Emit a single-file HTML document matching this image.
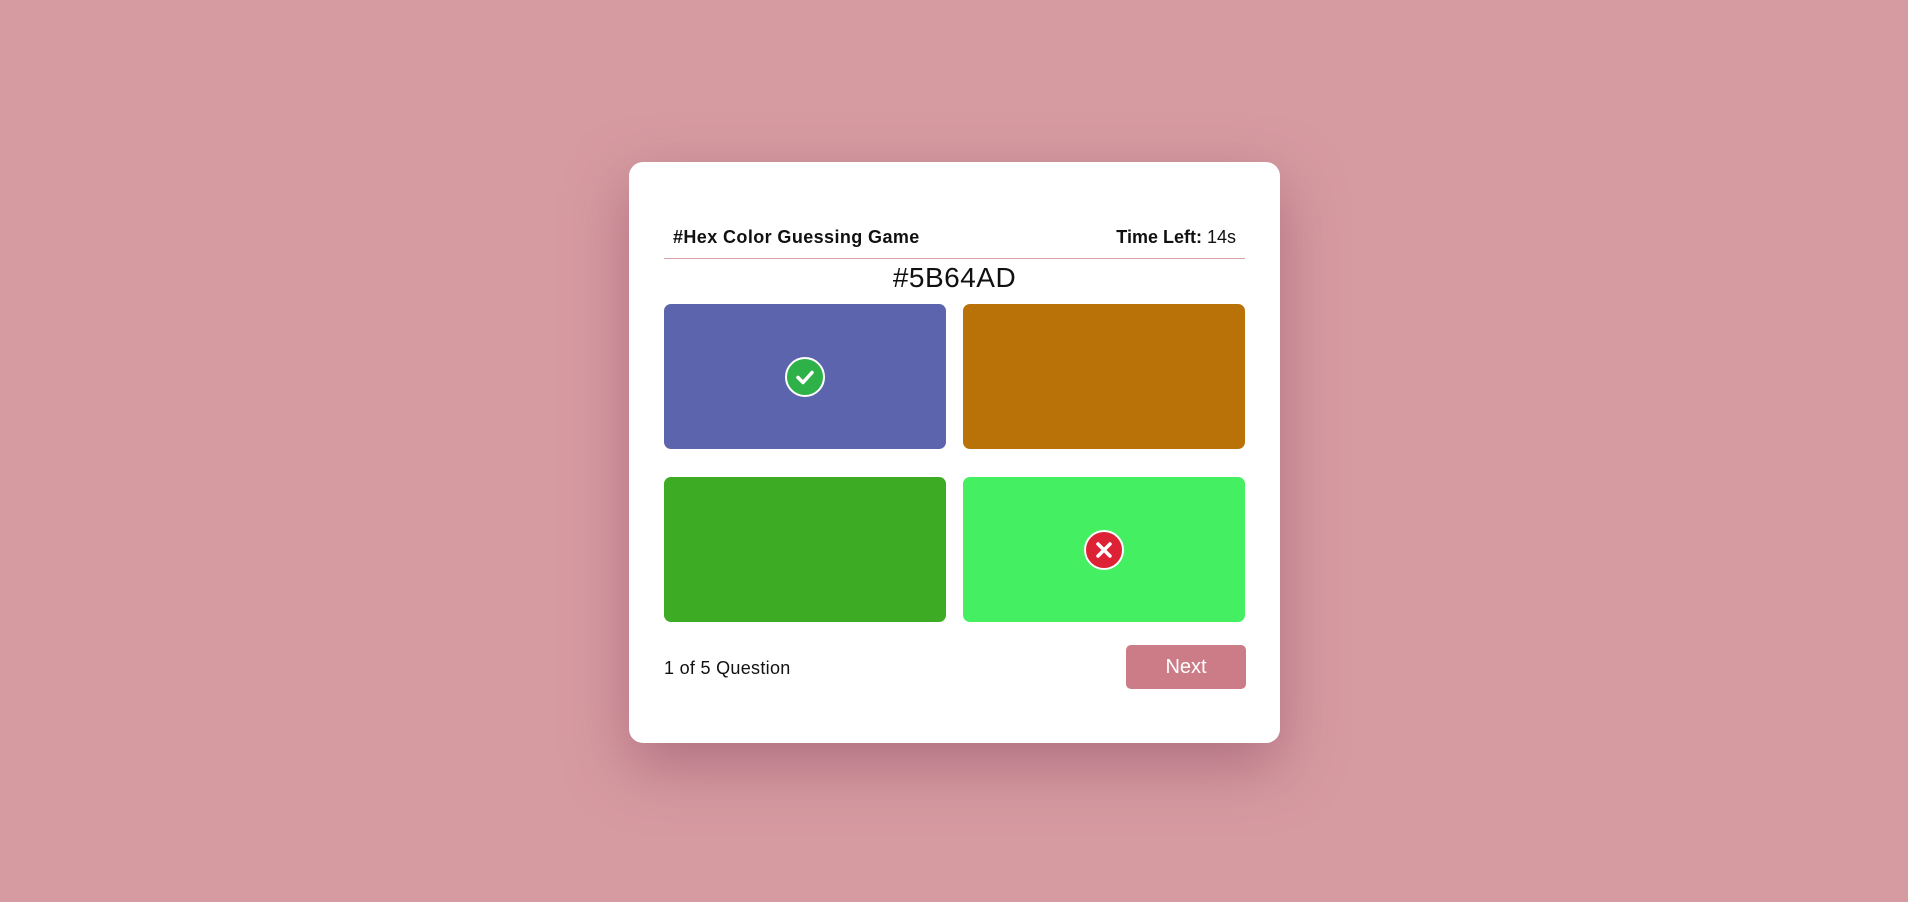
<!DOCTYPE html>
<html><head><meta charset="utf-8"><style>
html,body{margin:0;padding:0}
body{width:1908px;height:902px;background:#d69ba1;font-family:"Liberation Sans",sans-serif;position:relative;overflow:hidden}
.card{position:absolute;left:629px;top:162px;width:651px;height:581px;background:#fff;border-radius:14px;box-shadow:0 22px 60px rgba(140,70,95,.5)}
.hdr{position:absolute;left:35px;right:35px;top:0;height:96px;border-bottom:1.5px solid #d9a3a8}
.t{position:absolute;left:9px;top:65px;font-size:18px;font-weight:bold;color:#111;letter-spacing:.4px}
.tl{position:absolute;right:9px;top:65px;font-size:18px;color:#111}
.hex{position:absolute;left:0;right:0;top:100px;text-align:center;font-size:28px;color:#111;letter-spacing:.5px}
.b{position:absolute;width:282px;height:145px;border-radius:7px}
.ic{position:absolute;left:50%;top:50%;width:36px;height:36px;margin:-20px 0 0 -20px;border:2.5px solid #fff;border-radius:50%}
.foot{position:absolute;left:35px;top:496px;font-size:18px;color:#111;letter-spacing:.3px}
.btn{position:absolute;left:497px;top:483px;width:120px;height:44px;background:#cc7c87;border-radius:5px;color:#fff;font-size:20px;text-align:center;line-height:44px}
</style></head><body>
<div class="card">
<div class="hdr"><div class="t">#Hex Color Guessing Game</div><div class="tl"><b>Time Left:</b> 14s</div></div>
<div class="hex">#5B64AD</div>
<div class="b" style="left:35px;top:142px;background:#5b64ad"><div class="ic" style="background:#2fb14a"><svg width="36" height="36" viewBox="0 0 36 36"><path d="M11 18.5l5 5 9-10" fill="none" stroke="#fff" stroke-width="3.5" stroke-linecap="round" stroke-linejoin="round"/></svg></div></div>
<div class="b" style="left:334px;top:142px;background:#b97208"></div>
<div class="b" style="left:35px;top:315px;background:#3dab23"></div>
<div class="b" style="left:334px;top:315px;background:#44f062"><div class="ic" style="background:#dc2234"><svg width="36" height="36" viewBox="0 0 36 36"><path d="M12 12l12 12M24 12l-12 12" fill="none" stroke="#fff" stroke-width="3.5" stroke-linecap="round"/></svg></div></div>
<div class="foot">1 of 5 Question</div>
<div class="btn">Next</div>
</div>
</body></html>
